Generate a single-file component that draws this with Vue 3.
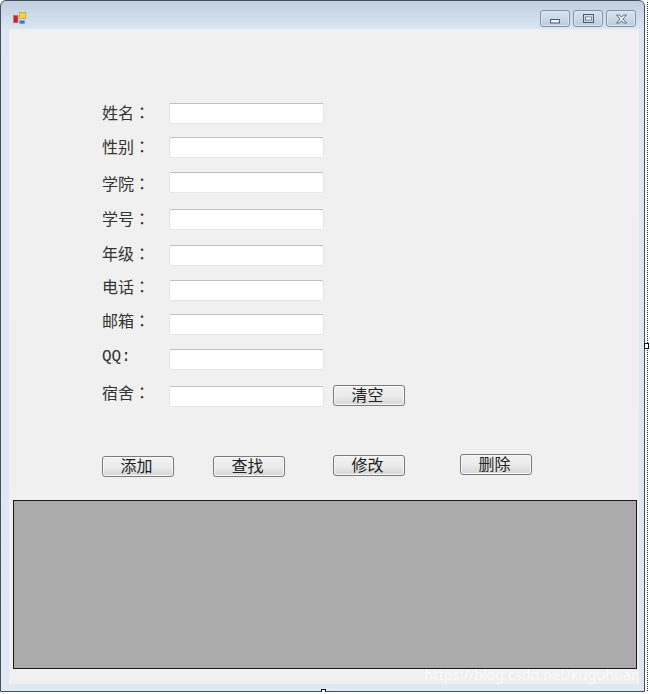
<script setup>
const rows = [
  { label: '姓名', gap: 0, shift: -1 },
  { label: '性别', gap: 13, shift: -1 },
  { label: '学院', gap: 14, shift: 1 },
  { label: '学号', gap: 16, shift: -1 },
  { label: '年级', gap: 15, shift: -2 },
  { label: '电话', gap: 14, shift: -4 },
  { label: '邮箱', gap: 13, shift: -4 },
  { label: 'QQ', gap: 14, shift: -2, latin: true },
  { label: '宿舍', gap: 16, shift: -4, action: '清空' }
]
const actions = [
  { text: '添加', left: 0, top: 2 },
  { text: '查找', left: 39, top: 2 },
  { text: '修改', left: 48, top: 1 },
  { text: '删除', left: 55, top: 0 }
]
</script>

<template>
  <div class="window">
    <header class="titlebar">
      <svg class="app-icon" width="14" height="13" viewBox="0 0 14 13">
        <rect x=".3" y="3.300" width="4.700" height="7.500" fill="#c0272d" stroke="#b9808a" stroke-width=".6" />
        <rect x="6.300" y=".3" width="6.500" height="6" fill="#f3d43a" stroke="#b59a22" stroke-width=".6" />
        <rect x="6.300" y="8.300" width="5.500" height="3.500" fill="#3f6fc4" stroke="#a3b6d8" stroke-width=".6" />
      </svg>
      <div class="controls">
        <button class="ctl">
          <svg class="min-icon" width="10" height="6" viewBox="0 0 10 6"><rect x=".5" y="1.5" width="9" height="3.500" fill="#eef1f4" stroke="#4d5b6c" /></svg>
        </button>
        <button class="ctl">
          <svg width="11" height="9" viewBox="0 0 11 9"><rect x=".5" y=".5" width="10" height="8" fill="none" stroke="#4d5b6c" /><rect x="2.500" y="3" width="6" height="3" fill="#fff" stroke="#4d5b6c" stroke-width=".7" /></svg>
        </button>
        <button class="ctl">
          <svg width="13" height="10" viewBox="0 0 13 10"><path d="M1.500 1h3l2 2.200L8.500 1h3L8 5l3.500 4h-3l-2-2.200L4.500 9h-3L5 5z" fill="#eef1f4" stroke="#56636f" stroke-width=".9" /></svg>
        </button>
      </div>
    </header>

    <main class="client">
      <form class="fields" @submit.prevent>
        <div v-for="row in rows" :key="row.label" class="row" :style="{ marginTop: row.gap + 'px' }">
          <span class="label" :class="{ latin: row.latin }" :style="{ marginTop: row.shift + 'px' }">{{ row.label }}<span v-if="!row.latin" class="colon">：</span><template v-else>:</template></span>
          <div class="input"></div>
          <button v-if="row.action" class="btn clear">{{ row.action }}</button>
        </div>
      </form>

      <div class="actions">
        <button
          v-for="item in actions"
          :key="item.text"
          class="btn"
          :style="{ marginLeft: item.left + 'px', marginTop: item.top + 'px' }"
        >{{ item.text }}</button>
      </div>

      <div class="grid-panel"></div>
    </main>

    <span class="selection"></span>
    <span class="handle right"></span>
    <span class="handle bottom"></span>
    <span class="watermark">https://blog.csdn.net/kuguhuan</span>
  </div>
</template>

<style>
html, body { margin: 0; background: #fff; }
</style>

<style scoped>
.window {
  position: relative;
  box-sizing: border-box;
  width: 645px;
  height: 692px;
  padding: 0 5px 7px 8px;
  display: flex;
  flex-direction: column;
  border: 1px solid #44505c;
  border-radius: 6px 6px 0 0;
  background: linear-gradient(#c0cfdf 0, #dce7f2 30px, #dfe9f4 100%);
  font-family: "Noto Sans CJK SC", sans-serif;
  color: #333;
}
.titlebar {
  height: 28px;
  flex: none;
  display: flex;
  align-items: flex-start;
  justify-content: space-between;
}
.app-icon { margin: 11px 0 0 4px; }
.controls { display: flex; gap: 3px; margin: 0 3px 0 0; padding-top: 9px; }
.ctl {
  box-sizing: border-box;
  width: 30px;
  height: 17px;
  padding: 0;
  display: flex;
  align-items: center;
  justify-content: center;
  border: 1px solid #7f93a8;
  border-radius: 3px;
  background: linear-gradient(#d9e4ef, #bccbdb);
  box-shadow: inset 0 0 0 1px #dfe8f1;
}
.min-icon { margin-top: 5px; }
.client {
  flex: 1;
  min-height: 0;
  box-sizing: border-box;
  padding: 74px 0 0 93px;
  display: flex;
  flex-direction: column;
  background: #f0f0f0;
}
.fields { display: flex; flex-direction: column; margin: 0; }
.row { height: 21px; display: flex; align-items: flex-start; }
.label {
  width: 67px;
  flex: none;
  font-size: 16px;
  line-height: 21px;
  white-space: nowrap;
}
.label.latin { font-family: "Liberation Mono", monospace; }
.colon { font-family: "Noto Sans CJK TC", sans-serif; }
.input {
  box-sizing: border-box;
  width: 155px;
  height: 21px;
  flex: none;
  background: #fff;
  border: 1px solid #e6e6e6;
  border-top-color: #c0c0c0;
  border-radius: 2px;
}
.btn {
  box-sizing: border-box;
  width: 72px;
  height: 21px;
  padding: 0 3px 2px 0;
  flex: none;
  font-family: inherit;
  font-size: 16px;
  line-height: 17px;
  color: #222;
  border: 1px solid #7a7a7a;
  border-radius: 3px;
  background: linear-gradient(#f2f2f2 0, #ebebeb 50%, #d6d6d6 100%);
  box-shadow: inset 0 0 0 1px #f7f7f7;
}
.clear { margin: -1px 0 0 9px; }
.actions { display: flex; align-items: flex-start; margin-top: 47px; height: 23px; }
.grid-panel {
  box-sizing: border-box;
  width: 624px;
  height: 169px;
  flex: none;
  margin: 23px 0 0 -89px;
  background: #ababab;
  border: 1px solid #1a1a1a;
}
.selection {
  position: absolute;
  top: 1px;
  bottom: 0;
  right: -4px;
  border-right: 1px dotted #333;
}
.handle {
  position: absolute;
  width: 5px;
  height: 6px;
  box-sizing: border-box;
  background: #fff;
  border: 1px solid #111;
}
.handle.right { right: -5px; top: 342px; }
.handle.bottom { left: 320px; bottom: -4px; }
.watermark {
  position: absolute;
  right: 4px;
  bottom: 6px;
  font-family: "Noto Sans", sans-serif;
  font-size: 14.400px;
  line-height: 20px;
  color: rgba(255, 255, 255, .7);
  white-space: nowrap;
}
</style>
